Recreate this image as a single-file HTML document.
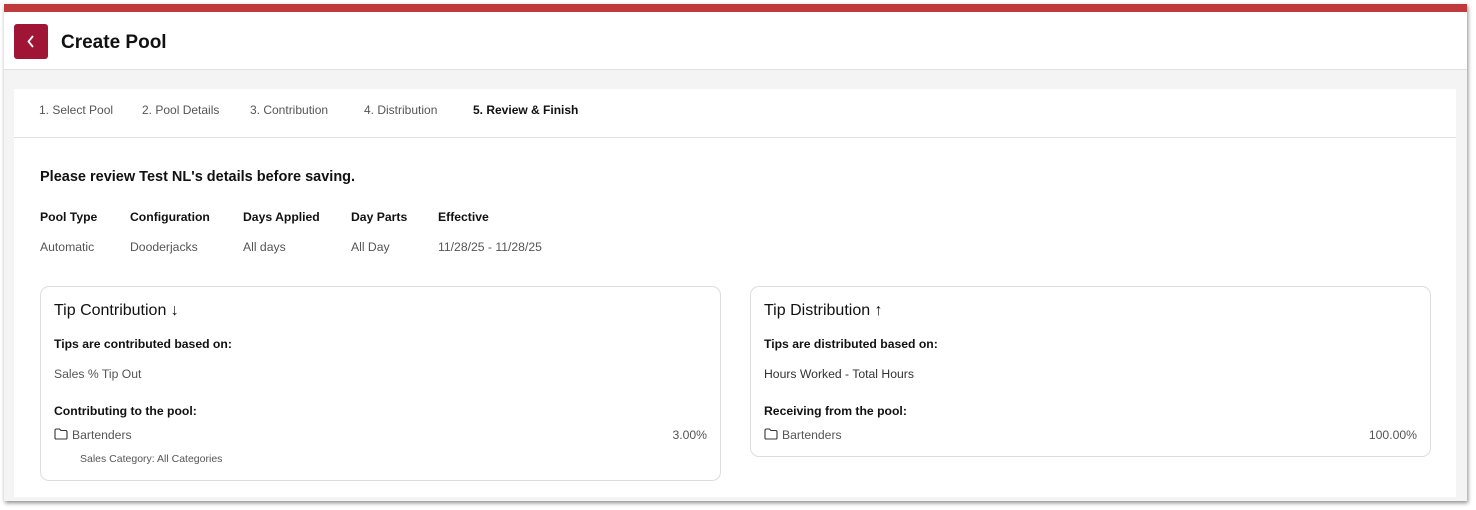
<!DOCTYPE html>
<html><head><style>
*{box-sizing:border-box;margin:0;padding:0}
body{width:1476px;height:510px;background:#fff;font-family:"Liberation Sans",sans-serif;position:relative;overflow:hidden}
.frame{position:absolute;left:4px;top:4px;width:1463px;height:497px;background:#f4f4f4;box-shadow:1px 2px 4px rgba(0,0,0,.45)}
.bar{position:absolute;left:0;top:0;width:100%;height:8px;background:#be3a3c}
.hdr{position:absolute;left:0;top:8px;width:100%;height:58px;background:#fff;border-bottom:1px solid #e2e2e2}
.back{position:absolute;left:10px;top:12px;width:34px;height:35px;background:#a01535;border-radius:3px;color:#fff}
.title{position:absolute;left:57px;top:20px;font-size:19px;font-weight:bold;color:#111}
.panel{position:absolute;left:10px;top:85px;width:1442px;height:408px;background:#fff}
.tabs{height:49px;border-bottom:1px solid #e0e0e0;position:relative;font-size:12px;color:#555}
.tabs span{position:absolute;top:14px}
.t{position:absolute;font-size:12.2px}
.b{font-weight:bold;color:#111}
.g{color:#555}
.card{position:absolute;border:1px solid #ddd;border-radius:9px;background:#fff}
</style></head><body>
<div class="frame">
<div class="bar"></div>
<div class="hdr">
<div class="back"><svg width="34" height="35"><path d="M19 12 L14.5 17.5 L19 23" stroke="#fff" stroke-width="1.8" fill="none"/></svg></div>
<div class="title">Create Pool</div>
</div>
<div class="panel">
<div class="tabs">
<span style="left:25px">1. Select Pool</span>
<span style="left:128px">2. Pool Details</span>
<span style="left:236px">3. Contribution</span>
<span style="left:350px">4. Distribution</span>
<span style="left:459px;font-weight:bold;color:#111">5. Review &amp; Finish</span>
</div>
<div class="t b" style="left:26px;top:80px;font-size:14.5px">Please review Test NL's details before saving.</div>
<div class="t b" style="left:26px;top:121px">Pool Type</div>
<div class="t b" style="left:116px;top:121px">Configuration</div>
<div class="t b" style="left:229px;top:121px">Days Applied</div>
<div class="t b" style="left:337px;top:121px">Day Parts</div>
<div class="t b" style="left:424px;top:121px">Effective</div>
<div class="t g" style="left:26px;top:151px">Automatic</div>
<div class="t g" style="left:116px;top:151px">Dooderjacks</div>
<div class="t g" style="left:229px;top:151px">All days</div>
<div class="t g" style="left:337px;top:151px">All Day</div>
<div class="t g" style="left:424px;top:151px">11/28/25 - 11/28/25</div>

<div class="card" style="left:26px;top:197px;width:681px;height:195px">
<div class="t" style="left:13px;top:15px;font-size:16px;color:#111">Tip Contribution ↓</div>
<div class="t b" style="left:13px;top:50px">Tips are contributed based on:</div>
<div class="t g" style="left:13px;top:80px">Sales % Tip Out</div>
<div class="t b" style="left:13px;top:117px">Contributing to the pool:</div>
<svg class="t" style="left:13px;top:141px" width="14" height="12"><path d="M1 2.5 Q1 1 2.5 1 H5.5 L7 2.5 H11.5 Q13 2.5 13 4 V10 Q13 11 12 11 H2 Q1 11 1 10 Z" stroke="#333" stroke-width="1.1" fill="none"/></svg>
<div class="t g" style="left:31px;top:141px">Bartenders</div>
<div class="t g" style="right:13px;top:141px">3.00%</div>
<div class="t g" style="left:39px;top:166px;font-size:10.5px">Sales Category: All Categories</div>
</div>

<div class="card" style="left:736px;top:197px;width:681px;height:171px">
<div class="t" style="left:13px;top:15px;font-size:16px;color:#111">Tip Distribution ↑</div>
<div class="t b" style="left:13px;top:50px">Tips are distributed based on:</div>
<div class="t" style="left:13px;top:80px;color:#333">Hours Worked - Total Hours</div>
<div class="t b" style="left:13px;top:117px">Receiving from the pool:</div>
<svg class="t" style="left:13px;top:141px" width="14" height="12"><path d="M1 2.5 Q1 1 2.5 1 H5.5 L7 2.5 H11.5 Q13 2.5 13 4 V10 Q13 11 12 11 H2 Q1 11 1 10 Z" stroke="#333" stroke-width="1.1" fill="none"/></svg>
<div class="t g" style="left:31px;top:141px">Bartenders</div>
<div class="t g" style="right:13px;top:141px">100.00%</div>
</div>
</div>
</div>
</body></html>
